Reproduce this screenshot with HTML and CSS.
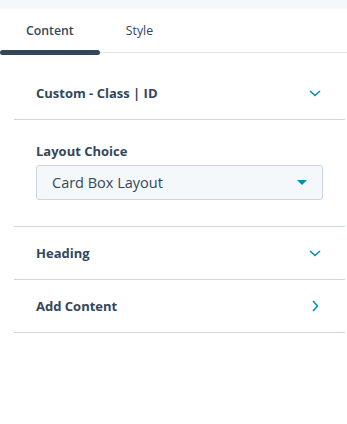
FILE: index.html
```html
<!DOCTYPE html>
<html>
<head>
<meta charset="utf-8">
<link rel="stylesheet" href="styles.css">
</head>
<body>
<div class="topbar"></div>
<div class="tabs">
  <div class="tab active">Content</div>
  <div class="tab">Style</div>
  <div class="tab-fill"></div>
</div>
<div class="panel">
  <div class="row">
    <span class="row-title">Custom - Class | ID</span>
    <svg class="chev-down" width="12" height="7" viewBox="0 0 12 7"><polyline points="1,1 6,5.5 11,1" fill="none" stroke="#0091ae" stroke-width="1.6"/></svg>
  </div>
  <div class="field">
    <div class="field-label">Layout Choice</div>
    <div class="select">
      <span>Card Box Layout</span>
      <svg class="caret" width="10" height="5" viewBox="0 0 10 5"><polygon points="0,0 10,0 5,5" fill="#0091ae"/></svg>
    </div>
  </div>
  <div class="row">
    <span class="row-title">Heading</span>
    <svg class="chev-down" width="12" height="7" viewBox="0 0 12 7"><polyline points="1,1 6,5.5 11,1" fill="none" stroke="#0091ae" stroke-width="1.6"/></svg>
  </div>
  <div class="row">
    <span class="row-title">Add Content</span>
    <svg class="chev-right" width="7" height="12" viewBox="0 0 7 12"><polyline points="1,1 5.5,6 1,11" fill="none" stroke="#0091ae" stroke-width="1.6"/></svg>
  </div>
</div>
</body>
</html>
```
FILE: styles.css
```css
html, body {
  margin: 0;
  padding: 0;
  background: #ffffff;
}
body {
  font-family: "Open Sans", "Liberation Sans", sans-serif;
  color: #33475b;
}
.topbar {
  height: 9px;
  background: #f5f8fa;
}
.tabs {
  display: flex;
  height: 44px;
  position: relative;
}
.tab {
  padding: 0 26px;
  font-size: 12.3px;
  line-height: 43px;
  color: #33475b;
  border-bottom: 1px solid #dfe3eb;
  height: 43px;
  box-sizing: content-box;
  position: relative;
}
.tab.active {
  font-weight: 600;
  border-bottom-color: transparent;
}
.tab.active::after {
  content: "";
  position: absolute;
  left: 0;
  right: 0;
  bottom: -3px;
  height: 5px;
  border-radius: 3px;
  background: #33475b;
}
.tab-fill {
  flex: 1;
  border-bottom: 1px solid #dfe3eb;
  height: 43px;
}
.panel {
  margin: 14px 2px 0 14px;
}
.row {
  height: 52px;
  border-bottom: 1px solid #cbd6e2;
  display: flex;
  align-items: center;
  justify-content: space-between;
  padding: 0 24px 0 22px;
}
.row-title {
  font-size: 13px;
  font-weight: 700;
}
.chev-right {
  margin-right: 2px;
}
.field {
  border-bottom: 1px solid #cbd6e2;
  padding: 22px 22px 26px 22px;
}
.field-label {
  font-size: 13px;
  font-weight: 700;
  line-height: 18px;
  margin-bottom: 5px;
}
.select {
  height: 35px;
  box-sizing: border-box;
  background: #f5f8fa;
  border: 1px solid #cbd6e2;
  border-radius: 3px;
  display: flex;
  align-items: center;
  justify-content: space-between;
  padding: 0 15px 0 15px;
  font-size: 14.5px;
}
```
